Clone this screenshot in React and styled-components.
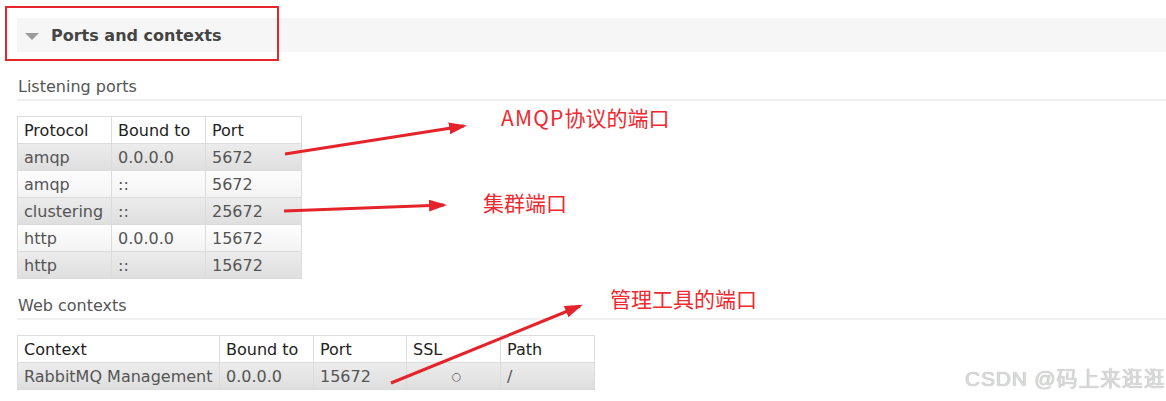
import React from "react";
import styled, { createGlobalStyle } from "styled-components";

const GlobalStyle = createGlobalStyle`
  html, body {
    margin: 0;
    padding: 0;
    background: #ffffff;
  }
  body {
    font-family: "DejaVu Sans", Verdana, sans-serif;
  }
`;

const Page = styled.div`
  position: relative;
  width: 1166px;
  height: 401px;
  overflow: hidden;
  padding-left: 17px;
  padding-top: 18px;
  box-sizing: border-box;
`;

const SectionBar = styled.div`
  display: flex;
  align-items: center;
  height: 34px;
  background: #f6f6f6;
  padding-left: 8px;
  gap: 12px;
`;

const Caret = styled.span`
  width: 0;
  height: 0;
  border-left: 7.5px solid transparent;
  border-right: 7.5px solid transparent;
  border-top: 7px solid #9a9a9a;
  margin-top: 2px;
`;

const SectionTitle = styled.h2`
  margin: 0;
  font-size: 16px;
  font-weight: bold;
  color: #444;
`;

const SubTitle = styled.h3`
  margin: ${(p) => p.$top}px 0 0 0;
  padding: 0 0 2px 1px;
  font-size: 16px;
  line-height: 20px;
  font-weight: normal;
  color: #555;
  border-bottom: 2px solid #f0f0f0;
`;

const Table = styled.table`
  margin-top: 15px;
  border-collapse: collapse;
  table-layout: fixed;
  border: 1px solid #d6d6d6;
  font-size: 16px;
`;

const HeadCell = styled.th`
  height: 26px;
  padding: 0 0 0 6px;
  text-align: left;
  font-weight: normal;
  color: #222;
  background: #ffffff;
  border: 1px solid #dcdcdc;
  white-space: nowrap;
`;

const Row = styled.tr`
  background: ${(p) =>
    p.$shaded
      ? "linear-gradient(#ececec, #dedede)"
      : "linear-gradient(#fdfdfd, #f3f3f3)"};
`;

const Cell = styled.td`
  height: 26px;
  padding: 0 0 0 6px;
  color: #555;
  border: 1px solid #dcdcdc;
  white-space: nowrap;
  text-align: ${(p) => (p.$center ? "center" : "left")};
  font-size: ${(p) => (p.$small ? "11px" : "inherit")};
`;

const Annotation = styled.svg`
  position: absolute;
  left: 0;
  top: 0;
  pointer-events: none;
`;

const HighlightBox = styled.div`
  position: absolute;
  left: 5px;
  top: 6px;
  width: 270px;
  height: 51px;
  border: 2px solid #e6262d;
`;

const Label = styled.span`
  position: absolute;
  left: ${(p) => p.$x}px;
  top: ${(p) => p.$y}px;
  font-family: "Noto Sans CJK SC", "Liberation Sans", sans-serif;
  font-size: 21px;
  line-height: 24px;
  color: #ee2a30;
  white-space: nowrap;
`;

const Latin = styled.span`
  letter-spacing: 1.2px;
`;

const Watermark = styled.span`
  position: absolute;
  left: 965px;
  top: 366px;
  font-family: "Liberation Sans", "Noto Sans CJK SC", sans-serif;
  font-size: 21px;
  line-height: 26px;
  letter-spacing: 0.8px;
  color: #dadada;
  text-shadow: 0 0 1px #a0a0a0;
  white-space: nowrap;
`;

const listening = [
  ["amqp", "0.0.0.0", "5672"],
  ["amqp", "::", "5672"],
  ["clustering", "::", "25672"],
  ["http", "0.0.0.0", "15672"],
  ["http", "::", "15672"],
];

const Arrow = ({ x1, y1, x2, y2 }) => (
  <line
    x1={x1}
    y1={y1}
    x2={x2}
    y2={y2}
    stroke="#e4232a"
    strokeWidth="3"
    markerEnd="url(#head)"
  />
);

export default function App() {
  return (
    <>
      <GlobalStyle />
      <Page>
        <SectionBar>
          <Caret />
          <SectionTitle>Ports and contexts</SectionTitle>
        </SectionBar>

        <SubTitle $top={25}>Listening ports</SubTitle>
        <Table>
          <colgroup>
            <col style={{ width: 94 }} />
            <col style={{ width: 94 }} />
            <col style={{ width: 96 }} />
          </colgroup>
          <thead>
            <tr>
              <HeadCell>Protocol</HeadCell>
              <HeadCell>Bound to</HeadCell>
              <HeadCell>Port</HeadCell>
            </tr>
          </thead>
          <tbody>
            {listening.map((r, i) => (
              <Row key={i} $shaded={i % 2 === 0}>
                <Cell>{r[0]}</Cell>
                <Cell>{r[1]}</Cell>
                <Cell>{r[2]}</Cell>
              </Row>
            ))}
          </tbody>
        </Table>

        <SubTitle $top={17}>Web contexts</SubTitle>
        <Table>
          <colgroup>
            <col style={{ width: 202 }} />
            <col style={{ width: 94 }} />
            <col style={{ width: 93 }} />
            <col style={{ width: 94 }} />
            <col style={{ width: 94 }} />
          </colgroup>
          <thead>
            <tr>
              <HeadCell>Context</HeadCell>
              <HeadCell>Bound to</HeadCell>
              <HeadCell>Port</HeadCell>
              <HeadCell>SSL</HeadCell>
              <HeadCell>Path</HeadCell>
            </tr>
          </thead>
          <tbody>
            <Row $shaded>
              <Cell>RabbitMQ Management</Cell>
              <Cell>0.0.0.0</Cell>
              <Cell>15672</Cell>
              <Cell $center $small>○</Cell>
              <Cell>/</Cell>
            </Row>
          </tbody>
        </Table>

        <HighlightBox />
        <Annotation width="1166" height="401">
          <defs>
            <marker
              id="head"
              markerWidth="6"
              markerHeight="4"
              refX="5"
              refY="2"
              orient="auto"
              markerUnits="strokeWidth"
            >
              <path d="M0,0 L6,2 L0,4 Z" fill="#e4232a" />
            </marker>
          </defs>
          <Arrow x1={285} y1={154} x2={464} y2={126} />
          <Arrow x1={284} y1={211} x2={444} y2={205} />
          <Arrow x1={391} y1={383} x2={580} y2={306} />
        </Annotation>
        <Label $x={501} $y={105}><Latin>AMQP</Latin>协议的端口</Label>
        <Label $x={483} $y={190}>集群端口</Label>
        <Label $x={610} $y={286}>管理工具的端口</Label>
        <Watermark>CSDN @码上来逛逛</Watermark>
      </Page>
    </>
  );
}
